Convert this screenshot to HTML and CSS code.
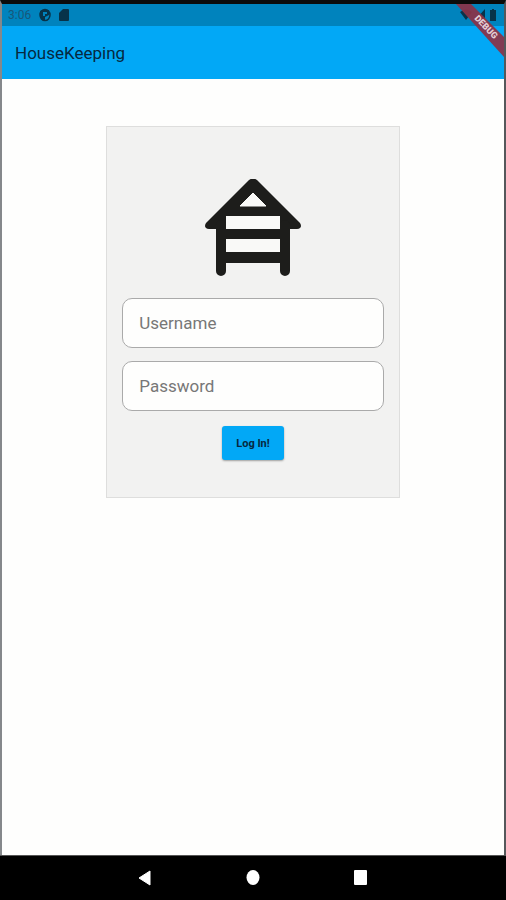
FILE: index.html
```html
<!DOCTYPE html>
<html lang="en">
<head>
    <meta charset="UTF-8">
    <meta name="viewport" content="width=device-width, initial-scale=1.0">
    <title>HouseKeeping</title>
    <link rel="stylesheet" href="styles.css">
</head>
<body>
<div class="screen">
    <div class="status-bar">
        <span class="clock">3:06</span>
        <svg class="status-icon" width="12" height="14" viewBox="0 0 12 14">
            <ellipse cx="6" cy="7" rx="5" ry="5.5" fill="none" stroke="#07334a" stroke-width="1.5"/>
            <path d="M1 3L4 2h6v5L6 9v3L3 12 1 9z" fill="#07334a"/>
            <path d="M4 4h4v2H6v2H4z" fill="#0083bd"/>
        </svg>
        <svg class="status-icon" width="10" height="14" viewBox="0 0 10 14">
            <path d="M4 1h5q1 0 1 1v10q0 1-1 1H1q-1 0-1-1V5z" fill="#07334a"/>
        </svg>
        <svg class="system-icons" width="38" height="14" viewBox="0 0 38 14">
            <path d="M0 4q6-5 12 0L6 12z" fill="#07334a"/>
            <path d="M25 1v11H15z" fill="#07334a"/>
            <path d="M30 2h2V1h2v1h2v11h-6z" fill="#07334a"/>
        </svg>
    </div>
    <header class="app-bar">
        <h1>HouseKeeping</h1>
    </header>
    <svg class="debug-banner" width="48" height="54" viewBox="0 0 48 54">
        <path d="M0 0H15L48 33V53z" fill="#8b3347" fill-opacity=".93"/>
        <text x="28" y="25" transform="rotate(46 28 25)">DEBUG</text>
    </svg>

    <main>
        <form class="login-card" action="#" method="post">
            <svg class="logo" width="98" height="98" viewBox="0 0 98 98">
                <path d="M45 1Q49-2 53 1L96 44Q99 49 93 50H5Q-1 49 2 44z" fill="#1d1d1b"/>
                <path d="M17 46V92M81 46V92" stroke="#1d1d1b" stroke-width="10" stroke-linecap="round"/>
                <path d="M17 44H81V84H17z" fill="#1d1d1b"/>
                <path d="M49 14L62 27H36z" fill="#f9f9f7" stroke="#f9f9f7" stroke-linejoin="round"/>
                <path d="M22 37H76V50H22zM22 60H76V73H22z" fill="#f9f9f7"/>
            </svg>
            <input type="text" name="username" placeholder="Username" aria-label="Username" required>
            <input type="password" name="password" placeholder="Password" aria-label="Password" required>
            <button type="submit" class="btn-login">Log In!</button>
        </form>
    </main>

    <nav class="nav-bar">
        <button type="button" aria-label="Back">
            <svg width="14" height="16" viewBox="0 0 14 16"><path d="M1 8L12 1V15z" fill="#fff" stroke="#fff" stroke-linejoin="round"/></svg>
        </button>
        <button type="button" aria-label="Home">
            <svg width="14" height="16" viewBox="0 0 14 16"><ellipse cx="7" cy="7.5" rx="6.5" ry="7.5" fill="#fff"/></svg>
        </button>
        <button type="button" aria-label="Overview">
            <svg width="14" height="16" viewBox="0 0 14 16"><rect width="13" height="15" rx="1" fill="#fff"/></svg>
        </button>
    </nav>
</div>
</body>
</html>
```
FILE: styles.css
```css
*,
*::before,
*::after {
    box-sizing: border-box;
}

body {
    margin: 0;
    font-family: Roboto, Arial, sans-serif;
    background-color: #000;
}

.screen {
    position: relative;
    display: flex;
    flex-direction: column;
    min-height: 100vh;
    border-top: 4px solid #0b0b0b;
    border-left: 2px solid #85888b;
    border-right: 2px solid #55585b;
    background-color: #fefefd;
}

.status-bar {
    display: flex;
    align-items: center;
    gap: 8px;
    height: 22px;
    padding: 0 6px;
    background-color: #0083bd;
}

.clock {
    font-size: 12px;
    color: #17587a;
}

.system-icons {
    margin-left: auto;
}

.app-bar {
    display: flex;
    align-items: center;
    height: 53px;
    padding: 0 13px;
    background-color: #02a8f6;
}

.app-bar h1 {
    margin: 0;
    font-size: 17px;
    font-weight: 400;
    color: #06283f;
}

/* corner ribbon */
.debug-banner {
    position: absolute;
    top: 0;
    right: 0;
}

.debug-banner text {
    font-size: 9px;
    font-weight: 900;
    fill: #e3cdd4;
    text-anchor: middle;
}

main {
    flex: 1;
    padding: 47px 0;
}

.login-card {
    display: flex;
    flex-direction: column;
    align-items: center;
    width: 58vw;
    min-width: 240px;
    margin: 0 auto;
    padding: 52px 15px 37px;
    border: 1px solid #dededd;
    background-color: #f2f2f1;
}

.logo {
    margin-bottom: 21px;
}

.login-card input {
    width: 100%;
    height: 50px;
    margin-bottom: 13px;
    padding: 0 16px;
    border: 1px solid #aaa;
    border-radius: 10px;
    background-color: #fefefd;
    font-family: inherit;
    font-size: 17px;
    color: #222;
}

.login-card input::placeholder {
    color: #777;
    opacity: 1;
}

.btn-login {
    height: 34px;
    margin-top: 2px;
    padding: 0 14px;
    border: none;
    border-radius: 3px;
    background-color: #02a8f6;
    box-shadow: 0 1px 2px rgba(0, 0, 0, 0.35);
    font-family: inherit;
    font-size: 11px;
    font-weight: 700;
    color: #06283f;
    cursor: pointer;
}

.nav-bar {
    display: flex;
    justify-content: center;
    align-items: center;
    gap: 68px;
    height: 45px;
    margin: 0 -2px;
    border-top: 1px solid #555;
    background-color: #000;
}

.nav-bar button {
    display: flex;
    justify-content: center;
    width: 40px;
    padding: 0;
    border: none;
    background: none;
}
```
